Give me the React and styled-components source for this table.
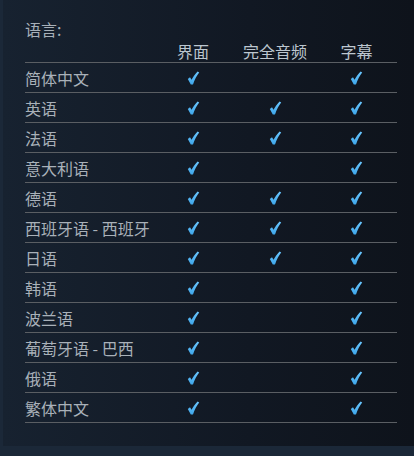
import React from "react";
import styled, { createGlobalStyle } from "styled-components";

const Global = createGlobalStyle`
  html, body { margin: 0; padding: 0; background: #1b2838; }
  body { font-family: "Noto Sans CJK SC", "Noto Sans", sans-serif; }
`;

const Page = styled.div`
  width: 414px;
  height: 456px;
  background: #1b2838;
  padding-left: 3px;
  box-sizing: border-box;
  overflow: hidden;
`;

const Panel = styled.div`
  height: 446px;
  box-sizing: border-box;
  padding: 19px 0 0 22px;
  background: linear-gradient(to right, #172230 0%, #111823 60%, #0e131b 100%);
`;

const Label = styled.div`
  font-size: 16px;
  line-height: 20px;
  height: 20px;
  color: #a7b0b9;
`;

const Table = styled.div`
  width: 372px;
  margin-top: 1px;
`;

const Row = styled.div`
  display: grid;
  grid-template-columns: 127px 82px 82px 81px;
  align-items: center;
  height: ${(p) => (p.$head ? "22px" : "29px")};
  border-bottom: 1px solid #5a5e63;
  font-size: 16px;
  color: ${(p) => (p.$head ? "#bcc6cf" : "#a9b1b9")};
`;

const Name = styled.div`
  white-space: nowrap;
  line-height: 20px;
`;

const Cell = styled.div`
  display: flex;
  justify-content: center;
  align-items: center;
  line-height: 20px;
  white-space: nowrap;
`;

const Check = () => (
  <svg width="13" height="14" viewBox="0 0 13 14">
    <defs>
      <linearGradient id="ck" x1="0" y1="0" x2="0" y2="1">
        <stop offset="0" stopColor="#6cc8ff" />
        <stop offset="1" stopColor="#3ea6ea" />
      </linearGradient>
    </defs>
    <path
      d="M0.8 8 L3 6.2 L4.5 8.8 C6 5.8 8.2 2.8 10.6 0.4 L12.2 1.6 C9.8 4.6 7.6 8.6 6 13.5 L3.8 13.5 Z"
      fill="url(#ck)"
    />
  </svg>
);

const langs = [
  ["简体中文", 1, 0, 1],
  ["英语", 1, 1, 1],
  ["法语", 1, 1, 1],
  ["意大利语", 1, 0, 1],
  ["德语", 1, 1, 1],
  ["西班牙语 - 西班牙", 1, 1, 1],
  ["日语", 1, 1, 1],
  ["韩语", 1, 0, 1],
  ["波兰语", 1, 0, 1],
  ["葡萄牙语 - 巴西", 1, 0, 1],
  ["俄语", 1, 0, 1],
  ["繁体中文", 1, 0, 1],
];

export default function App() {
  return (
    <>
      <Global />
      <Page>
        <Panel>
          <Label>语言:</Label>
          <Table>
            <Row $head>
              <Name />
              <Cell>界面</Cell>
              <Cell>完全音频</Cell>
              <Cell>字幕</Cell>
            </Row>
            {langs.map(([n, a, b, c]) => (
              <Row key={n}>
                <Name>{n}</Name>
                <Cell>{a ? <Check /> : null}</Cell>
                <Cell>{b ? <Check /> : null}</Cell>
                <Cell>{c ? <Check /> : null}</Cell>
              </Row>
            ))}
          </Table>
        </Panel>
      </Page>
    </>
  );
}
